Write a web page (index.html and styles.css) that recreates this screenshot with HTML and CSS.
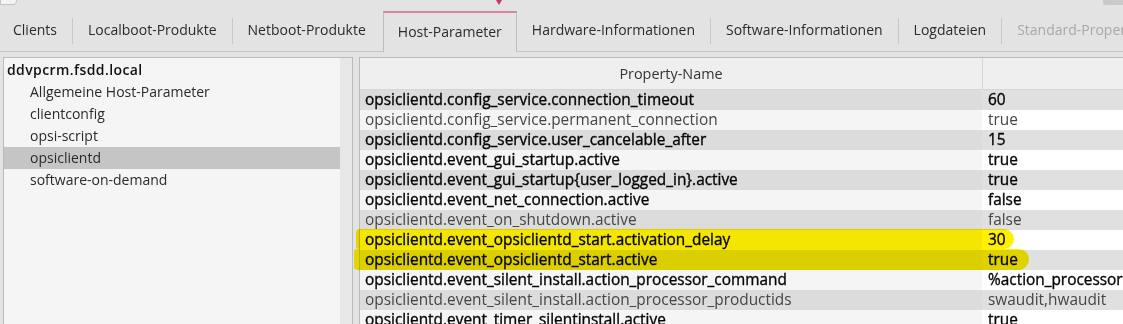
FILE: index.html
```html
<!DOCTYPE html>
<html lang="de">
<head>
    <meta charset="UTF-8">
    <title>opsi configed - Host-Parameter</title>
    <link rel="stylesheet" href="styles.css">
</head>
<body>

    <!-- cut-off toolbar above the tabs -->
    <div class="topstrip">
        <div class="stub-left"></div>
        <div class="stub-right"></div>
    </div>

    <!-- Tabs -->
    <div class="tabbar">
        <div class="tab">Clients</div>
        <div class="tab">Localboot-Produkte</div>
        <div class="tab">Netboot-Produkte</div>
        <div class="tab active">Host-Parameter<span class="marker"></span></div>
        <div class="tab">Hardware-Informationen</div>
        <div class="tab">Software-Informationen</div>
        <div class="tab">Logdateien</div>
        <div class="tab disabled">Standard-Properties</div>
    </div>

    <div class="main">
        <!-- Host tree -->
        <div class="tree-panel">
            <ul class="tree">
                <li class="root">ddvpcrm.fsdd.local</li>
                <li>Allgemeine Host-Parameter</li>
                <li>clientconfig</li>
                <li>opsi-script</li>
                <li class="selected">opsiclientd</li>
                <li>software-on-demand</li>
            </ul>
            <div class="scroll-track"></div>
        </div>

        <!-- Property table -->
        <div class="table-panel">
            <div class="thead">
                <div class="th name">Property-Name</div>
                <div class="th value"></div>
            </div>
            <div class="row dark strong"><div class="cell name">opsiclientd.config_service.connection_timeout</div><div class="cell value">60</div></div>
            <div class="row light"><div class="cell name">opsiclientd.config_service.permanent_connection</div><div class="cell value">true</div></div>
            <div class="row dark strong"><div class="cell name">opsiclientd.config_service.user_cancelable_after</div><div class="cell value">15</div></div>
            <div class="row light strong"><div class="cell name">opsiclientd.event_gui_startup.active</div><div class="cell value">true</div></div>
            <div class="row dark strong"><div class="cell name">opsiclientd.event_gui_startup{user_logged_in}.active</div><div class="cell value">true</div></div>
            <div class="row light strong"><div class="cell name">opsiclientd.event_net_connection.active</div><div class="cell value">false</div></div>
            <div class="row dark"><div class="cell name">opsiclientd.event_on_shutdown.active</div><div class="cell value">false</div></div>
            <div class="row light strong"><div class="cell name">opsiclientd.event_opsiclientd_start.activation_delay</div><div class="cell value">30</div></div>
            <div class="row dark strong"><div class="cell name">opsiclientd.event_opsiclientd_start.active</div><div class="cell value">true</div></div>
            <div class="row light strong"><div class="cell name">opsiclientd.event_silent_install.action_processor_command</div><div class="cell value">%action_processor.command%</div></div>
            <div class="row dark"><div class="cell name">opsiclientd.event_silent_install.action_processor_productids</div><div class="cell value">swaudit,hwaudit</div></div>
            <div class="row light strong"><div class="cell name">opsiclientd.event_timer_silentinstall.active</div><div class="cell value">true</div></div>
        </div>

        <!-- yellow marker strokes drawn over the table -->
        <div class="marker-stroke stroke1"></div>
        <div class="marker-stroke stroke2"></div>
    </div>

</body>
</html>
```

FILE: styles.css
```css
body {
    margin: 0;
    width: 1123px;
    height: 324px;
    overflow: hidden;
    background-color: #e3e3e3;
    font-family: "Open Sans", "Noto Sans", sans-serif;
    font-size: 14px;
    color: #222;
}

/* bits of the toolbar that is cut off at the top */
.topstrip {
    display: flex;
    justify-content: space-between;
    height: 0;
}

.stub-left {
    width: 15px;
    height: 4px;
    margin-top: -1px;
    background-color: #f4f4f4;
    border: 1px solid #c4c4c4;
    border-radius: 0 0 4px 0;
}

.stub-right {
    width: 20px;
    height: 5px;
    background-color: #c9c9c9;
    border-radius: 0 0 0 3px;
}

/* tabs */
.tabbar {
    display: flex;
    height: 40px;
    padding-top: 11px;
    border-bottom: 1px solid #c6c6c6;
    white-space: nowrap;
}

.tab {
    position: relative;
    display: flex;
    align-items: center;
    padding: 0 15px 3px 16px;
    color: #2b2b2b;
}

.tab::before {
    content: "";
    position: absolute;
    left: 0;
    top: 7px;
    height: 26px;
    border-left: 1px solid #c8c8c8;
}

.tab:first-child {
    padding-left: 13px;
}

.tab:first-child::before,
.tab.active::before,
.tab.active + .tab::before {
    display: none;
}

.tab.active {
    padding: 0 14px 3px 14px;
    margin-left: 2px;
    margin-bottom: -1px;
    border: 1px solid #bdbdbd;
    border-top: 2px solid #d9849a;
    border-bottom: none;
    background-color: #e3e3e3;
}

.tab.active + .tab {
    padding-left: 15px;
}

.tab.disabled {
    color: #a8a8a8;
}

.marker {
    position: absolute;
    right: 14px;
    top: -13px;
    width: 0;
    height: 0;
    border-left: 3px solid transparent;
    border-right: 3px solid transparent;
    border-top: 5px solid #d0336b;
}

/* main area */
.main {
    position: relative;
    display: flex;
    gap: 6px;
    padding: 5px 0 0 3px;
}

.tree-panel {
    display: flex;
    flex-shrink: 0;
    width: 348px;
    height: 280px;
    background-color: #f5f5f5;
    border: 1px solid #bababa;
}

.tree {
    flex: 1;
    list-style: none;
    margin: 0;
    padding: 1px 0 0 0;
}

.tree li {
    height: 22px;
    line-height: 22px;
    padding-left: 26px;
    color: #2a2a2a;
}

.tree li.root {
    padding-left: 3px;
    color: #111;
    font-weight: 600;
    letter-spacing: 0.4px;
}

.tree li.selected {
    background-color: #c5c5c5;
}

.scroll-track {
    width: 12px;
    background-color: #e7e7e7;
}

.table-panel {
    flex-shrink: 0;
    width: 800px;
    background-color: #fff;
    border: 1px solid #bababa;
    border-right: none;
}

.thead {
    display: flex;
    height: 31px;
    background-color: #efefef;
    border-bottom: 1px solid #d6d6d6;
}

.th {
    line-height: 31px;
    font-size: 14.4px;
    color: #333;
}

.th.name {
    flex-shrink: 0;
    width: 622px;
    text-align: center;
    border-right: 1px solid #d6d6d6;
}

.row {
    display: flex;
    height: 20px;
    line-height: 20px;
    font-size: 15.4px;
    white-space: nowrap;
    color: #454545;
}

.row .cell.name {
    flex-shrink: 0;
    width: 617px;
    padding-left: 5px;
    overflow: hidden;
}

.row .cell.value {
    flex: 1;
    padding-left: 5px;
    border-left: 1px solid transparent;
}

.row.dark .cell.name {
    background-color: #dcdcdc;
}

.row.dark .cell.value {
    background-color: #e0e0e0;
}

.row.light .cell.name {
    background-color: #f5f5f5;
}

.row.light .cell.value {
    background-color: #ffffff;
}

.row.strong {
    color: #050505;
    -webkit-text-stroke: 0.35px #050505;
}

/* highlighter pen */
.marker-stroke {
    position: absolute;
    background-color: #fff000;
    mix-blend-mode: multiply;
}

.stroke1 {
    left: 356px;
    top: 177px;
    width: 658px;
    height: 20px;
    border-radius: 4px 10px 10px 3px;
}

.stroke2 {
    left: 354px;
    top: 197px;
    width: 675px;
    height: 21px;
    border-radius: 3px 10px 11px 4px;
}
```
